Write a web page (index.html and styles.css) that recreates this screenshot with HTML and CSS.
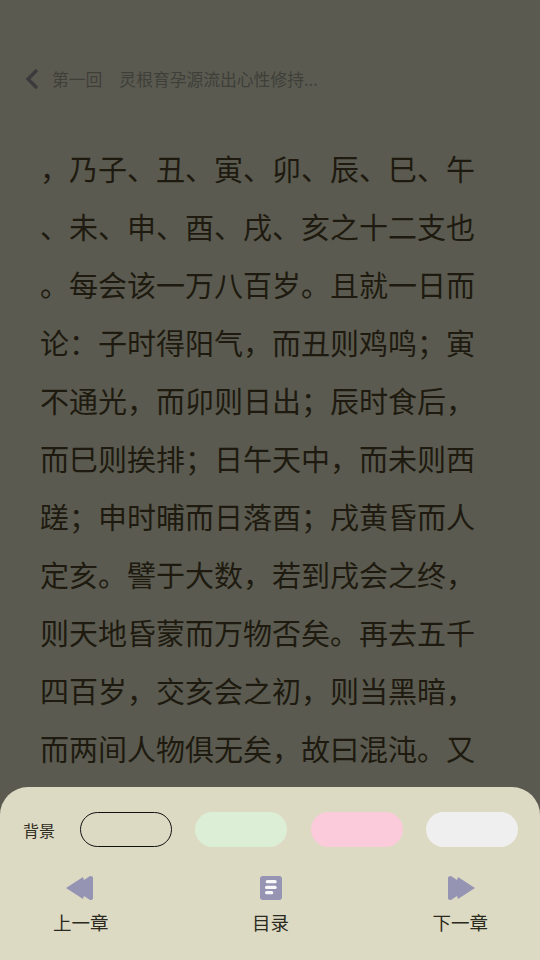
FILE: index.html
```html
<!DOCTYPE html>
<html lang="zh-CN">

<head>
    <meta charset="UTF-8">
    <meta name="viewport" content="width=device-width, initial-scale=1.0">
    <title>第一回</title>
    <link rel="stylesheet" href="styles.css">
</head>

<body>
    <div class="page">
        <header class="topbar">
            <svg class="back" width="14" height="22" viewBox="0 0 14 22">
                <path d="M12 2 L3 11 L12 20" fill="none" stroke="#3b3b3d" stroke-width="3.4" />
            </svg>
            <span class="chapter">第一回</span>
            <span class="title">灵根育孕源流出心性修持...</span>
        </header>
        <main class="content">
            <p>，乃子、丑、寅、卯、辰、巳、午、未、申、酉、戌、亥之十二支也。每会该一万八百岁。且就一日而论：子时得阳气，而丑则鸡鸣；寅不通光，而卯则日出；辰时食后，而巳则挨排；日午天中，而未则西蹉；申时晡而日落酉；戌黄昏而人定亥。譬于大数，若到戌会之终，则天地昏蒙而万物否矣。再去五千四百岁，交亥会之初，则当黑暗，而两间人物俱无矣，故曰混沌。又</p>
        </main>
        <section class="sheet">
            <div class="bgrow">
                <span class="bglabel">背景</span>
                <div class="swatches">
                    <div class="swatch cream active"></div>
                    <div class="swatch green"></div>
                    <div class="swatch pink"></div>
                    <div class="swatch grey"></div>
                </div>
            </div>
            <nav class="navrow">
                <div class="navitem prev">
                    <svg width="28" height="24" viewBox="0 0 28 24">
                        <path d="M0 12 L17 1 L18 4 L24 0 Q27 0 27 2 L27 22 Q27 24 24 24 L18 20 L17 23 Z" fill="#9594b3" />
                    </svg>
                    <span>上一章</span>
                </div>
                <div class="navitem">
                    <svg width="24" height="24" viewBox="0 0 24 24">
                        <rect x="2" width="22" height="24" rx="3" fill="#9594b3" />
                        <rect x="7.7" y="4" width="11" height="3.3" rx="1.6" fill="#f8f8fa" />
                        <rect x="7" y="9.7" width="11.7" height="3.3" rx="1.6" fill="#f8f8fa" />
                        <rect x="7" y="15" width="8.3" height="3.3" rx="1.6" fill="#f8f8fa" />
                    </svg>
                    <span>目录</span>
                </div>
                <div class="navitem next">
                    <svg width="28" height="24" viewBox="0 0 28 24">
                        <path d="M28 12 L11 1 L10 4 L4 0 Q1 0 1 2 L1 22 Q1 24 4 24 L10 20 L11 23 Z" fill="#9594b3" />
                    </svg>
                    <span>下一章</span>
                </div>
            </nav>
        </section>
    </div>
</body>

</html>
```

FILE: styles.css
```css
* {
    margin: 0;
    padding: 0;
    box-sizing: border-box;
}

body {
    font-family: "Noto Sans CJK SC", "Noto Sans", sans-serif;
    background-color: #5a5a50;
}

.page {
    position: relative;
    width: 540px;
    height: 960px;
    overflow: hidden;
    background-color: #5a5a50;
}

.topbar {
    display: flex;
    align-items: center;
    height: 24px;
    margin-top: 67px;
    padding-left: 25px;
    font-size: 16.8px;
    color: #3f3f3a;
}

.back {
    margin-top: 0;
}

.chapter {
    margin-left: 13px;
}

.title {
    margin-left: 17px;
}

.content {
    margin-top: 48px;
    padding: 0 40px;
}

.content p {
    width: 436px;
    font-size: 29px;
    line-height: 58px;
    color: #1e1a0f;
    line-break: anywhere;
    word-break: break-all;
}

.sheet {
    position: absolute;
    left: 0;
    right: 0;
    bottom: 0;
    height: 173px;
    padding: 25px 22px 0 23px;
    background-color: #dddac4;
    border-radius: 28px 28px 0 0;
}

.bgrow {
    display: flex;
    align-items: center;
}

.bglabel {
    width: 57px;
    font-size: 16px;
    color: #2e2c22;
}

.swatches {
    flex: 1;
    display: flex;
    justify-content: space-between;
}

.swatch {
    width: 92px;
    height: 35px;
    border-radius: 18px;
}

.active {
    border: 1px solid #111;
}

.green {
    background-color: #dcefd6;
}

.pink {
    background-color: #fccbdb;
}

.grey {
    background-color: #efefef;
}

.navrow {
    display: flex;
    justify-content: space-between;
    margin-top: 29px;
    padding: 0 30px;
}

.navitem {
    display: flex;
    flex-direction: column;
    align-items: center;
    gap: 8px;
    font-size: 18.5px;
    line-height: 28px;
    color: #2b2a20;
}

.prev svg {
    margin-right: 2px;
}

.next svg {
    margin-left: 2px;
}
```
